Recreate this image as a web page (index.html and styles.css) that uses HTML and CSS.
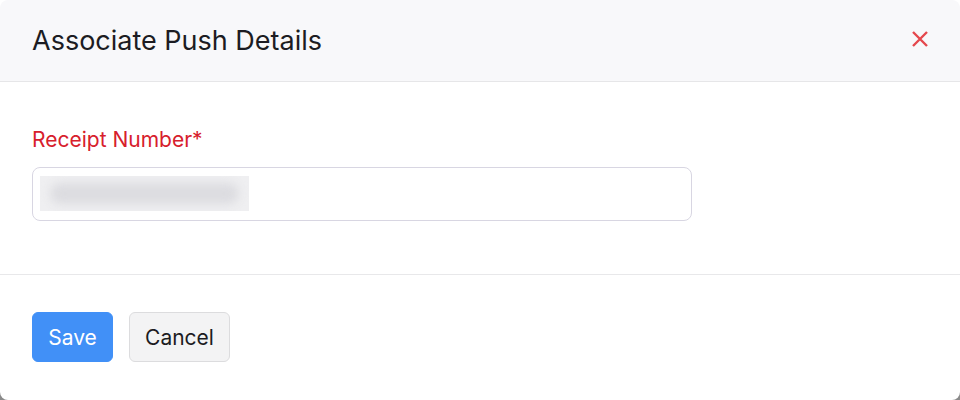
FILE: index.html
```html
<!DOCTYPE html>
<html lang="en">
<head>
<meta charset="utf-8">
<title>Associate Push Details</title>
<link rel="stylesheet" href="styles.css">
</head>
<body>
<div class="modal">
  <header class="modal-header">
    <h1 class="modal-title">Associate Push Details</h1>
    <button class="close-btn" aria-label="Close">
      <svg width="18" height="18" viewBox="0 0 18 18"><path d="M2 2L16 16M16 2L2 16" stroke="#e5484d" stroke-width="2.4" stroke-linecap="butt"/></svg>
    </button>
  </header>
  <section class="modal-body">
    <label class="field-label" for="receipt">Receipt Number*</label>
    <div class="input-box" id="receipt">
      <div class="blurred"></div>
    </div>
  </section>
  <footer class="modal-footer">
    <button class="btn btn-primary">Save</button>
    <button class="btn btn-secondary">Cancel</button>
  </footer>
</div>
</body>
</html>
```

FILE: styles.css
```css
* { box-sizing: border-box; }
html, body {
  margin: 0;
  width: 960px;
  height: 400px;
  overflow: hidden;
}
body {
  background: linear-gradient(to bottom, #ffffff 50%, #8a8a8a 50%);
  font-family: Inter, "Noto Sans", sans-serif;
}
.modal {
  width: 960px;
  height: 400px;
  background: #ffffff;
  border-radius: 8px;
  overflow: hidden;
  display: flex;
  flex-direction: column;
}
.modal-header {
  height: 82px;
  background: #f8f8fa;
  border-bottom: 1px solid #e6e6e8;
  display: flex;
  align-items: center;
  justify-content: space-between;
  padding: 0 31px 0 32px;
}
.modal-title {
  margin: 0;
  font-size: 27px;
  line-height: 32px;
  font-weight: 400;
  color: #1c1c22;
  letter-spacing: 0;
}
.close-btn {
  border: 0;
  background: none;
  padding: 0;
  width: 18px;
  height: 18px;
  display: flex;
  margin-top: -4px;
}
.modal-body {
  height: 193px;
  border-bottom: 1px solid #e8e8ea;
  padding: 44px 32px 0 32px;
  display: flex;
  flex-direction: column;
  align-items: flex-start;
}
.field-label {
  font-size: 21px;
  color: #d7202c;
  line-height: 28px;
  margin-bottom: 13px;
}
.input-box {
  width: 660px;
  height: 54px;
  border: 1px solid #d8d6e2;
  border-radius: 8px;
  padding: 8px 7px;
}
.blurred {
  width: 209px;
  height: 35px;
  background: #efeff1;
  position: relative;
  overflow: hidden;
}
.blurred::after {
  content: "";
  position: absolute;
  left: 10px;
  right: 10px;
  top: 7px;
  bottom: 7px;
  background: #dcdce0;
  border-radius: 12px;
  filter: blur(5px);
}
.modal-footer {
  flex: 1;
  padding: 37px 32px 0 32px;
  display: flex;
  align-items: flex-start;
  gap: 16px;
}
.btn {
  height: 50px;
  border-radius: 6px;
  font-family: Inter, "Noto Sans", sans-serif;
  font-size: 21px;
  padding: 0;
}
.btn-primary {
  width: 81px;
  background: #4190f7;
  border: 1px solid #4190f7;
  color: #ffffff;
}
.btn-secondary {
  width: 101px;
  background: #f3f3f4;
  border: 1px solid #dcdcde;
  color: #1c1c22;
}
```
